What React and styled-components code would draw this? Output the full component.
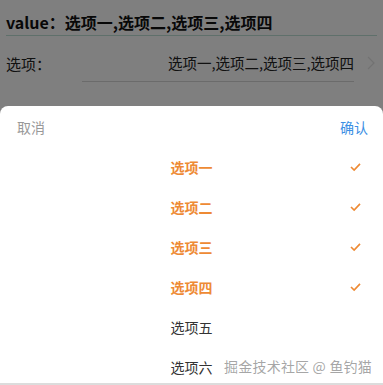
import React from "react";
import styled, { createGlobalStyle } from "styled-components";

const options = [
  { label: "选项一", checked: true },
  { label: "选项二", checked: true },
  { label: "选项三", checked: true },
  { label: "选项四", checked: true },
  { label: "选项五", checked: false },
  { label: "选项六", checked: false },
];

const GlobalStyle = createGlobalStyle`
  html, body {
    margin: 0;
    padding: 0;
    background: #ffffff;
    font-family: "Noto Sans CJK SC", "Noto Sans", sans-serif;
  }
  * { box-sizing: border-box; }
`;

const Page = styled.div`
  position: relative;
  width: 383px;
  height: 385px;
  overflow: hidden;
  background: #ffffff;
`;

const ValueBar = styled.div`
  margin: 0 6px;
  height: 36px;
  display: flex;
  align-items: center;
  padding-top: 8px;
  font-size: 16px;
  font-weight: bold;
  color: #111;
  border-bottom: 1px solid #bfe0d6;
`;

const FormRow = styled.div`
  display: flex;
  align-items: center;
  height: 42px;
  margin-top: 6px;
  padding: 0 8px 0 6px;
  font-size: 15px;
  color: #222;
`;

const Label = styled.span`
  width: 76px;
  flex-shrink: 0;
`;

const ValueText = styled.div`
  flex: 1;
  text-align: right;
  padding-bottom: 8px;
  margin-top: 8px;
  border-bottom: 1px solid #d6d6d6;
  font-size: 14.5px;
  color: #222;
`;

const Chevron = styled.svg`
  margin-left: 13px;
  flex-shrink: 0;
`;

const Mask = styled.div`
  position: absolute;
  inset: 0;
  background: rgba(0, 0, 0, 0.5);
`;

const Popup = styled.div`
  position: absolute;
  left: 0;
  right: 0;
  top: 106px;
  bottom: 0;
  background: #ffffff;
  border-radius: 8px 8px 0 0;
  border-bottom: 2px solid #dcdcdc;
  overflow: hidden;
`;

const PopupHeader = styled.div`
  display: flex;
  justify-content: space-between;
  align-items: center;
  height: 41px;
  padding: 0 15px 0 17px;
  font-size: 14px;
`;

const HeaderButton = styled.span`
  color: ${({ primary }) => (primary ? "#3b8fe4" : "#999999")};
`;

const OptionRow = styled.div`
  position: relative;
  height: 40px;
  display: flex;
  align-items: center;
  justify-content: center;
  font-size: 14px;
  font-weight: ${({ checked }) => (checked ? "bold" : "normal")};
  color: ${({ checked }) => (checked ? "#ee8a34" : "#333333")};
`;

const Check = styled.svg`
  position: absolute;
  right: 22px;
  top: 50%;
  transform: translateY(-50%);
`;

const Watermark = styled.div`
  position: absolute;
  right: 11px;
  bottom: 9px;
  font-size: 14px;
  color: rgba(150, 150, 150, 0.85);
  letter-spacing: 0.2px;
`;

const App = () => {
  return (
    <Page>
      <GlobalStyle />
      <ValueBar>value：选项一,选项二,选项三,选项四</ValueBar>
      <FormRow>
        <Label>选项：</Label>
        <ValueText>选项一,选项二,选项三,选项四</ValueText>
        <Chevron width="8" height="14" viewBox="0 0 8 14">
          <path d="M1 1l6 6-6 6" fill="none" stroke="#e4e4e4" strokeWidth="1.3" />
        </Chevron>
      </FormRow>
      <Mask />
      <Popup>
        <PopupHeader>
          <HeaderButton>取消</HeaderButton>
          <HeaderButton primary>确认</HeaderButton>
        </PopupHeader>
        {options.map((opt) => (
          <OptionRow key={opt.label} checked={opt.checked}>
            {opt.label}
            {opt.checked && (
              <Check width="11" height="9" viewBox="0 0 12 10">
                <path d="M1 5l3.5 3.5L11 1.5" fill="none" stroke="#ee8a34" strokeWidth="1.8" />
              </Check>
            )}
          </OptionRow>
        ))}
      </Popup>
      <Watermark>掘金技术社区 @ 鱼钓猫</Watermark>
    </Page>
  );
};

export default App;
